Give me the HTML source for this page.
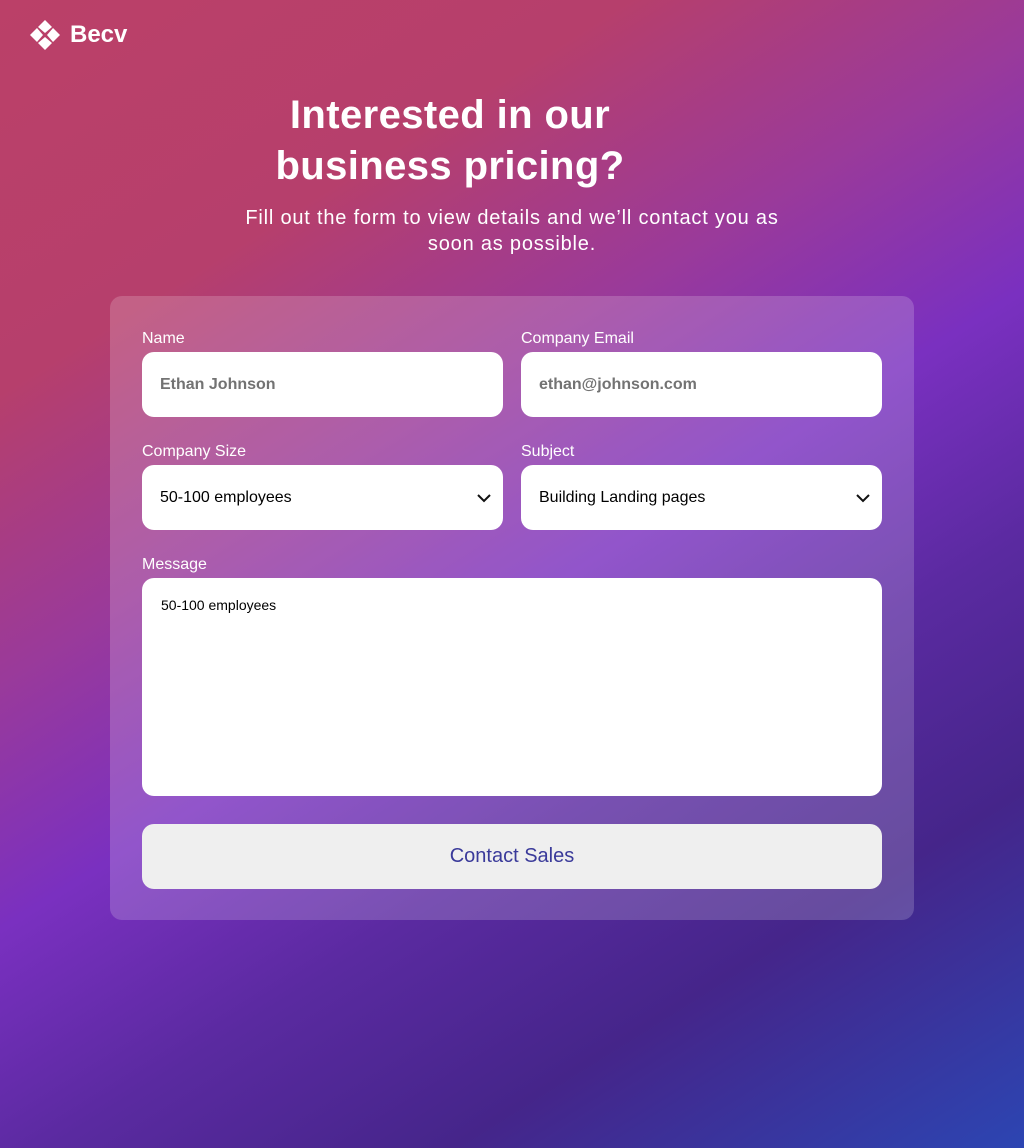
<!DOCTYPE html>
<html><head><meta charset="utf-8"><style>
*{box-sizing:border-box;margin:0;padding:0}
body{width:1024px;height:1148px;overflow:hidden;font-family:"Liberation Sans",sans-serif;
background:linear-gradient(148deg,#bb4068 0%,#b63f6c 22%,#9a3a9a 38%,#7a30c0 52%,#5a2aa0 66%,#45258a 80%,#2c45b2 100%);color:#fff;position:relative}
.logo{position:absolute;left:30px;top:20px;display:flex;align-items:center}
.logo span{font-size:24px;font-weight:bold;margin-left:10px}
h1{position:absolute;left:0;width:900px;top:90px;text-align:center;font-size:40px;line-height:51px;font-weight:bold;letter-spacing:0.4px}
p.sub{position:absolute;left:232px;width:560px;top:205px;text-align:center;font-size:20px;line-height:26px;letter-spacing:0.8px}
.card{position:absolute;left:110px;top:296px;width:804px;height:624px;border-radius:12px;background:rgba(255,255,255,0.18)}
.lbl{position:absolute;font-size:16px}
.in{position:absolute;background:#fff;border-radius:12px;height:65px;width:361px;font-size:16px;color:#000;padding-left:18px;display:flex;align-items:center}
.ph{color:#737373;font-weight:bold}
.chev{position:absolute;right:12px;top:28px}
.ta{position:absolute;left:32px;top:282px;width:740px;height:218px;background:#fff;border-radius:12px;color:#000;font-size:14px;padding:19px 19px}
.btn{position:absolute;left:32px;top:528px;width:740px;height:65px;background:#efefef;border-radius:12px;color:#3a3a9a;font-size:20px;display:flex;align-items:center;justify-content:center}
</style></head><body>
<div class="logo"><svg width="30" height="30" viewBox="0 0 30 30" fill="#fff">
<path d="M15 0L22 7L15 13L8 7Z"/><path d="M15 17L22 23L15 30L8 23Z"/><path d="M0 15L7 8L13 15L7 22Z"/><path d="M17 15L23 8L30 15L23 22Z"/></svg><span>Becv</span></div>
<h1>Interested in our<br>business pricing?</h1>
<p class="sub">Fill out the form to view details and we’ll contact you as soon as possible.</p>
<div class="card">
<div class="lbl" style="left:32px;top:34px">Name</div>
<div class="lbl" style="left:411px;top:34px">Company Email</div>
<div class="in" style="left:32px;top:56px"><span class="ph">Ethan Johnson</span></div>
<div class="in" style="left:411px;top:56px"><span class="ph">ethan@johnson.com</span></div>
<div class="lbl" style="left:32px;top:147px">Company Size</div>
<div class="lbl" style="left:411px;top:147px">Subject</div>
<div class="in" style="left:32px;top:169px">50-100 employees<svg class="chev" width="14" height="10" viewBox="0 0 14 10"><path d="M1 2L7 8L13 2" stroke="#111" stroke-width="2" fill="none"/></svg></div>
<div class="in" style="left:411px;top:169px">Building Landing pages<svg class="chev" width="14" height="10" viewBox="0 0 14 10"><path d="M1 2L7 8L13 2" stroke="#111" stroke-width="2" fill="none"/></svg></div>
<div class="lbl" style="left:32px;top:260px">Message</div>
<div class="ta">50-100 employees</div>
<div class="btn">Contact Sales</div>
</div>
</body></html>
